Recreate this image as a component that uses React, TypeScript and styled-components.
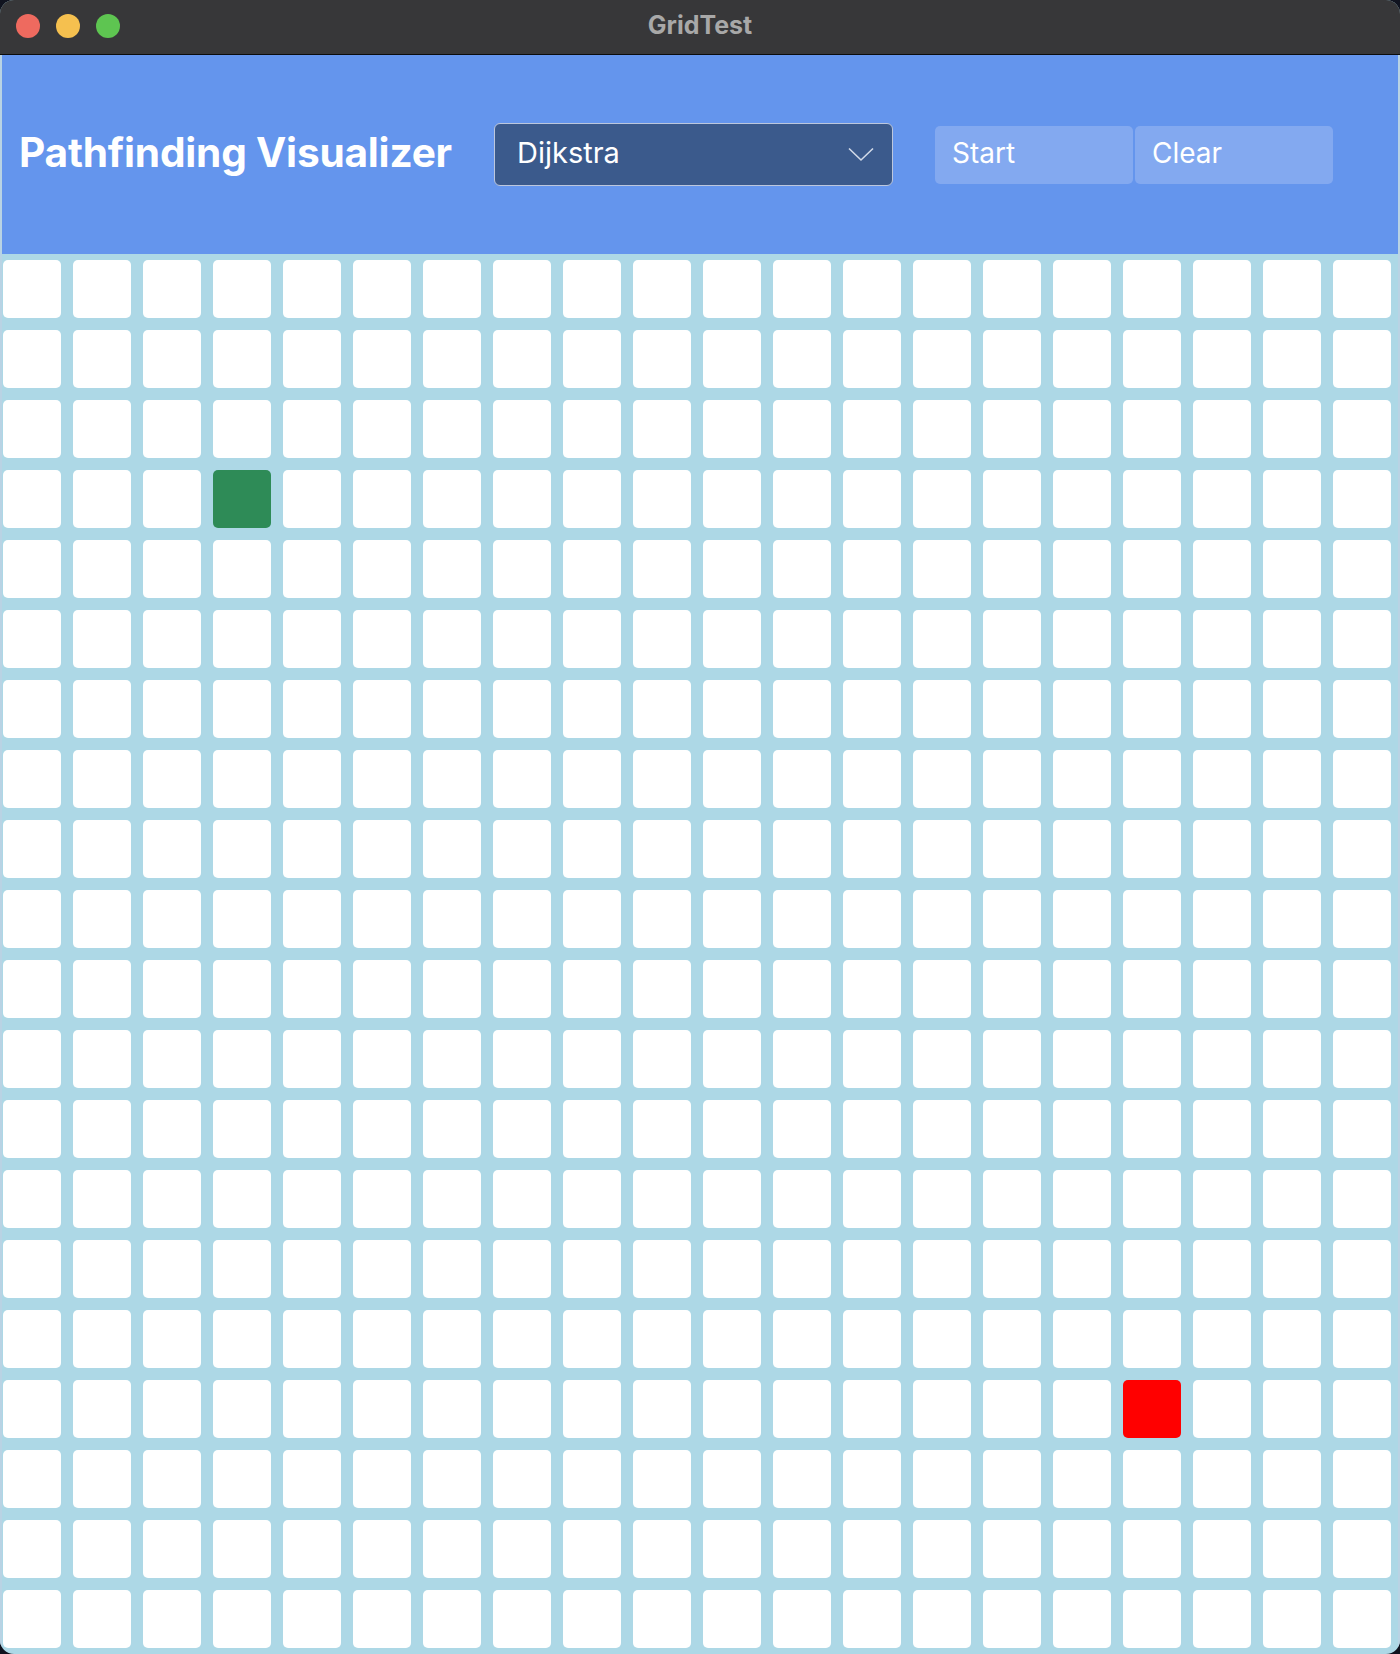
import React from "react"
import styled, { createGlobalStyle } from "styled-components"

const COLS = 20
const ROWS = 20
const START = { row: 3, col: 3 }
const END = { row: 16, col: 16 }

const GlobalStyle = createGlobalStyle`
  html, body {
    margin: 0;
    padding: 0;
    background: #10131f;
  }

  body {
    font-family: Inter, "Noto Sans", "Liberation Sans", sans-serif;
  }
`

const Window = styled.div`
  display: flex;
  flex-direction: column;

  width: 1400px;
  height: 1654px;

  border-radius: 14px;
  overflow: hidden;

  background: #add8e6;
`

const TitleBar = styled.div`
  position: relative;

  display: flex;
  align-items: center;
  justify-content: center;

  box-sizing: border-box;
  height: 55px;

  padding-bottom: 5px;

  background: #373739;
  border-bottom: 1px solid #0c0c0c;
`

const Lights = styled.div`
  position: absolute;
  left: 16px;
  top: 14px;

  display: flex;
  gap: 16px;
`

const Light = styled.span<{ $color: string }>`
  width: 24px;
  height: 24px;

  border-radius: 50%;

  background: ${p => p.$color};
`

const WindowTitle = styled.span`
  font-size: 25px;
  font-weight: 700;

  color: #a8a8a8;
`

const Body = styled.div`
  display: flex;
  flex-direction: column;

  flex: 1;

  border-left: 2px solid #b9d3e4;
  border-right: 2px solid #b9d3e4;
`

const Header = styled.header`
  display: flex;
  align-items: center;

  height: 199px;

  padding-left: 17px;

  background: #6495ed;
`

const H1 = styled.h1`
  width: 475px;

  margin: 0 0 4px;

  font-size: 40.6px;
  font-weight: 700;
  letter-spacing: -0.2px;

  color: #ffffff;
`

const Select = styled.div`
  display: flex;
  align-items: center;
  justify-content: space-between;

  box-sizing: border-box;
  width: 399px;
  height: 63px;

  padding: 0 18px 4px 22px;

  background: #3b5a8c;
  border: 1.5px solid #bcc7dd;
  border-radius: 6px;

  font-size: 29px;

  color: #ffffff;

  svg {
    margin-top: 4px;
  }
`

const Buttons = styled.div`
  display: flex;
  gap: 2px;

  margin-left: 42px;
`

const Button = styled.button`
  box-sizing: border-box;
  width: 198px;
  height: 58px;

  padding: 0 0 4px 17px;

  text-align: left;

  background: #83a9f0;
  border: none;
  border-radius: 5px;

  font-family: Inter, "Noto Sans", "Liberation Sans", sans-serif;
  font-size: 28px;

  color: #ffffff;
`

const Grid = styled.div`
  display: grid;
  grid-template-columns: repeat(${COLS}, 58px);
  grid-auto-rows: 58px;
  gap: 12px;

  padding: 6px 0 0 1px;
`

const Cell = styled.div<{ $kind: "start" | "end" | "empty" }>`
  border-radius: 5px;

  background: ${p =>
    p.$kind === "start" ? "#2e8b57" : p.$kind === "end" ? "#ff0000" : "#ffffff"};
`

const Chevron = () => (
  <svg width="26" height="15" viewBox="0 0 26 15" fill="none">
    <path d="M1 1.5 L13 13 L25 1.5" stroke="#d2dae8" strokeWidth="1.6" />
  </svg>
)

const cellKind = (row: number, col: number) => {
  if (row === START.row && col === START.col) return "start"
  if (row === END.row && col === END.col) return "end"
  return "empty"
}

const App = () => {
  const cells = []
  for (let r = 0; r < ROWS; r++) {
    for (let c = 0; c < COLS; c++) {
      cells.push(<Cell key={`${r}-${c}`} $kind={cellKind(r, c)} />)
    }
  }

  return (
    <>
      <GlobalStyle />
      <Window>
        <TitleBar>
          <Lights>
            <Light $color="#ee6a5f" />
            <Light $color="#f5c04f" />
            <Light $color="#5ec551" />
          </Lights>
          <WindowTitle>GridTest</WindowTitle>
        </TitleBar>
        <Body>
          <Header>
            <H1>Pathfinding Visualizer</H1>
            <Select>
              <span>Dijkstra</span>
              <Chevron />
            </Select>
            <Buttons>
              <Button>Start</Button>
              <Button>Clear</Button>
            </Buttons>
          </Header>
          <Grid>{cells}</Grid>
        </Body>
      </Window>
    </>
  )
}

export default App
